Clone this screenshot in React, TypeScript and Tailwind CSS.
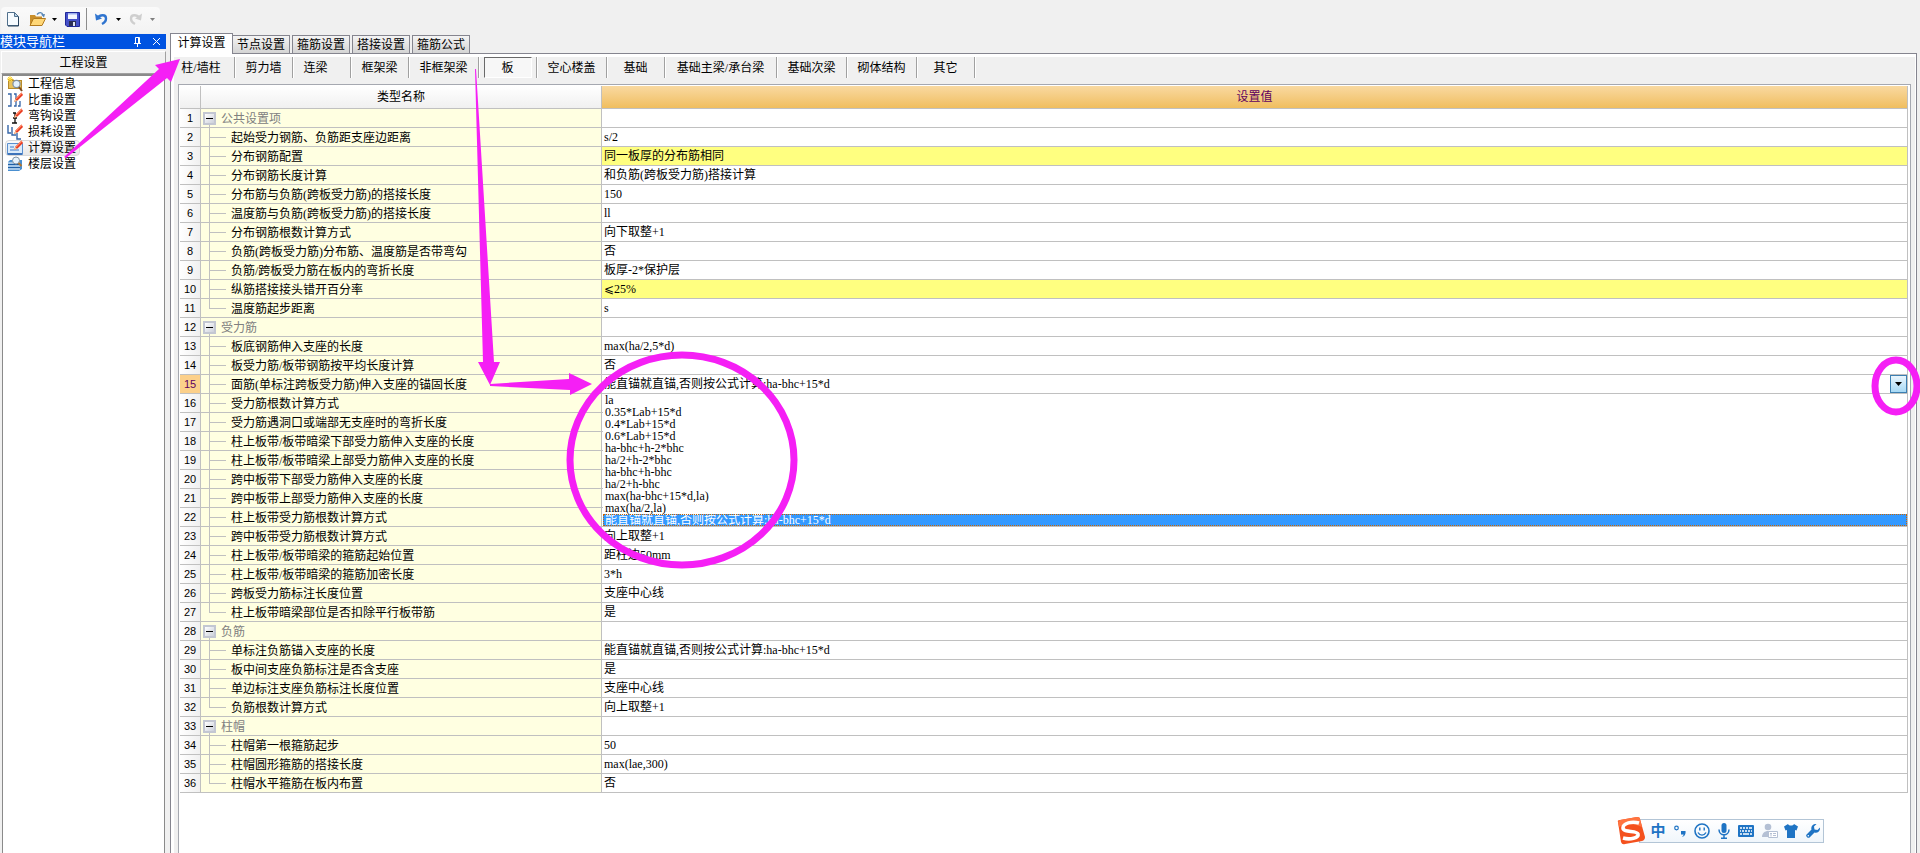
import { useState } from "react";
import { clsx } from "clsx";

type Row = {
  name: string;
  value?: string;
  group?: boolean;
  highlight?: boolean;
};

const ANCHOR = "能直锚就直锚,否则按公式计算:ha-bhc+15*d";

const ROWS: Row[] = [
  { name: "公共设置项", group: true },
  { name: "起始受力钢筋、负筋距支座边距离", value: "s/2" },
  { name: "分布钢筋配置", value: "同一板厚的分布筋相同", highlight: true },
  { name: "分布钢筋长度计算", value: "和负筋(跨板受力筋)搭接计算" },
  { name: "分布筋与负筋(跨板受力筋)的搭接长度", value: "150" },
  { name: "温度筋与负筋(跨板受力筋)的搭接长度", value: "ll" },
  { name: "分布钢筋根数计算方式", value: "向下取整+1" },
  { name: "负筋(跨板受力筋)分布筋、温度筋是否带弯勾", value: "否" },
  { name: "负筋/跨板受力筋在板内的弯折长度", value: "板厚-2*保护层" },
  { name: "纵筋搭接接头错开百分率", value: "⩽25%", highlight: true },
  { name: "温度筋起步距离", value: "s" },
  { name: "受力筋", group: true },
  { name: "板底钢筋伸入支座的长度", value: "max(ha/2,5*d)" },
  { name: "板受力筋/板带钢筋按平均长度计算", value: "否" },
  { name: "面筋(单标注跨板受力筋)伸入支座的锚固长度", value: ANCHOR },
  { name: "受力筋根数计算方式", value: "向上取整+1" },
  { name: "受力筋遇洞口或端部无支座时的弯折长度" },
  { name: "柱上板带/板带暗梁下部受力筋伸入支座的长度" },
  { name: "柱上板带/板带暗梁上部受力筋伸入支座的长度" },
  { name: "跨中板带下部受力筋伸入支座的长度" },
  { name: "跨中板带上部受力筋伸入支座的长度" },
  { name: "柱上板带受力筋根数计算方式" },
  { name: "跨中板带受力筋根数计算方式", value: "向上取整+1" },
  { name: "柱上板带/板带暗梁的箍筋起始位置", value: "距柱边50mm" },
  { name: "柱上板带/板带暗梁的箍筋加密长度", value: "3*h" },
  { name: "跨板受力筋标注长度位置", value: "支座中心线" },
  { name: "柱上板带暗梁部位是否扣除平行板带筋", value: "是" },
  { name: "负筋", group: true },
  { name: "单标注负筋锚入支座的长度", value: ANCHOR },
  { name: "板中间支座负筋标注是否含支座", value: "是" },
  { name: "单边标注支座负筋标注长度位置", value: "支座中心线" },
  { name: "负筋根数计算方式", value: "向上取整+1" },
  { name: "柱帽", group: true },
  { name: "柱帽第一根箍筋起步", value: "50" },
  { name: "柱帽圆形箍筋的搭接长度", value: "max(lae,300)" },
  { name: "柱帽水平箍筋在板内布置", value: "否" },
];

const ACTIVE_ROW = 15;

const OPTIONS = [
  "la",
  "0.35*Lab+15*d",
  "0.4*Lab+15*d",
  "0.6*Lab+15*d",
  "ha-bhc+h-2*bhc",
  "ha/2+h-2*bhc",
  "ha-bhc+h-bhc",
  "ha/2+h-bhc",
  "max(ha-bhc+15*d,la)",
  "max(ha/2,la)",
  ANCHOR,
];

const TABS = ["计算设置", "节点设置", "箍筋设置", "搭接设置", "箍筋公式"];

const MEMBERS = [
  { label: "柱/墙柱", width: "w-[61px] pr-1.5" },
  { label: "剪力墙", width: "w-[58px]" },
  { label: "连梁", width: "w-[58px] pr-3" },
  { label: "框架梁", width: "w-[58px]" },
  { label: "非框架梁", width: "w-[70px]" },
  { label: "板", width: "w-[58px]" },
  { label: "空心楼盖", width: "w-[70px]" },
  { label: "基础", width: "w-[58px]" },
  { label: "基础主梁/承台梁", width: "w-[112px]" },
  { label: "基础次梁", width: "w-[70px]" },
  { label: "砌体结构", width: "w-[70px]" },
  { label: "其它", width: "w-[58px]" },
];

function Pencil() {
  return (
    <g>
      <path d="M14.5 0.5 8.5 6.5 7 10l3.5-1.5L16 3z" fill="#e8391f" />
      <path d="M14.5 0.5 8.5 6.5l1 .8L15.2 1.6z" fill="#ff8a66" />
      <path d="M8.3 6.9 7 10l3-1.3z" fill="#f2cf9c" />
    </g>
  );
}

const NAV = [
  {
    label: "工程信息",
    icon: (
      <>
        <path d="M1 3h5l1 1h8v9H1z" fill="#b78a2a" />
        <path d="M2 5h12v7H2z" fill="#e9c15a" />
        <path d="M3 0v6M0 3h6M1 1l4 4M5 1 1 5" stroke="#ffd835" />
        <circle cx="9.5" cy="8" r="3.6" fill="#e4f1fb" stroke="#7f8fa0" strokeWidth="1.2" />
        <path d="m12 11 3 4" stroke="#7a4a20" strokeWidth="2" />
      </>
    ),
  },
  {
    label: "比重设置",
    icon: (
      <>
        <path d="M1 2h3v12H1M7 2h2v12H7M13 9v5h-2" fill="none" stroke="#3565a8" strokeWidth="1.3" />
        <Pencil />
      </>
    ),
  },
  {
    label: "弯钩设置",
    icon: (
      <>
        <path d="M6 5h3M8 5v10M6 10h4M5 15h5" fill="none" stroke="#111" strokeWidth="1.3" />
        <Pencil />
      </>
    ),
  },
  {
    label: "损耗设置",
    icon: (
      <>
        <path d="M1 1v8h3M5 3v8h4M10 9v6h4" fill="none" stroke="#3565a8" strokeWidth="1.4" />
        <Pencil />
      </>
    ),
  },
  {
    label: "计算设置",
    icon: (
      <>
        <path d="M.5 3.5h15v11H.5z" fill="#dcecfb" stroke="#5b8fce" />
        <path d="M1 13h14v2H1z" fill="#3e74bb" />
        <path d="M3 7h4M3 10h9" stroke="#3c78c8" />
        <Pencil />
      </>
    ),
  },
  {
    label: "楼层设置",
    icon: (
      <>
        <path d="M3 4h12v9l-3 2H1V6z" fill="#4a8fd0" />
        <path d="M1 7h12M1 10h12M1 13h12" stroke="#fff" />
        <path d="M1 8.5h12M1 11.5h12" stroke="#1f5fa6" />
        <circle cx="9" cy="4.5" r="3.5" fill="#e6f3fd" stroke="#8193a5" />
        <path d="m11.5 7 3 3" stroke="#b5762c" strokeWidth="2" />
      </>
    ),
  },
];

function Caret({ muted }: { muted?: boolean }) {
  return (
    <svg className="h-[3px] w-[5px]" viewBox="0 0 5 3" aria-hidden="true">
      <path d="M0 0h5L2.5 3z" fill={muted ? "#808080" : "#000"} />
    </svg>
  );
}

function Toolbar() {
  return (
    <div className="flex h-[33px] pt-[7px] pl-px">
      <div className="flex w-[159px] items-center rounded-sm bg-linear-to-b from-[#fafafa] to-[#f3f3f3] pb-0.5 pl-1.5">
        <button type="button" aria-label="新建">
          <svg className="h-4 w-3" viewBox="0 0 12 16">
            <path d="M.5 1.5h7l4 4v9H.5z" fill="#f6fbff" stroke="#51708c" />
            <path d="M7.5 1.5v4h4z" fill="#b9d3e8" stroke="#51708c" />
            <path d="M11.5 6v9H1" fill="none" stroke="#27425c" />
          </svg>
        </button>
        <button type="button" aria-label="打开" className="ml-2.5">
          <svg className="h-4 w-[17px]" viewBox="0 0 17 16">
            <path d="M1 4h5l1 1.5h6V14H1z" fill="#c98f2b" />
            <path d="M4.5 7.5h12L13 14.5H1z" fill="#ffd777" stroke="#b27a1e" />
            <path d="M8 3.500C10 1 13 1 14 4" fill="none" stroke="#5585b5" strokeWidth="1.3" />
            <path d="m12 3.500 4-.5-1 3.500z" fill="#5585b5" />
          </svg>
        </button>
        <button type="button" aria-label="打开列表" className="ml-1.5">
          <Caret />
        </button>
        <button type="button" aria-label="保存" className="ml-2">
          <svg className="h-[15px] w-[15px]" viewBox="0 0 15 15">
            <path d="M.5.5h14v14H2L.5 13z" fill="#4550c8" stroke="#20289a" />
            <path d="M3 1h9v6H3z" fill="#f4f7ff" />
            <path d="M3 1h9v1.5H3z" fill="#9fb0ee" />
            <path d="M4 9h7v5H4z" fill="#2c2f55" />
            <path d="M8 10h2v4H8z" fill="#dfe4f4" />
          </svg>
        </button>
        <span className="ml-1.5 h-[22px] w-px bg-[#8c8c8c]" />
        <button type="button" aria-label="撤销" className="ml-2">
          <svg className="h-[14px] w-[13px]" viewBox="0 0 13 14">
            <path d="M2.5 6C5 2.5 11 2 11 6.5c0 3-2 4.5-4 5.5" fill="none" stroke="#2f74cf" strokeWidth="2.4" />
            <path d="M0 1.5 1 8.5l6-2z" fill="#2f74cf" />
          </svg>
        </button>
        <button type="button" aria-label="撤销列表" className="ml-2">
          <Caret />
        </button>
        <button type="button" aria-label="重做" className="ml-2">
          <svg className="h-[14px] w-[13px]" viewBox="0 0 13 14">
            <path d="M10.5 6C8 2.5 2 2 2 6.5c0 3 2 4.5 4 5.5" fill="none" stroke="#cfcfcf" strokeWidth="2.4" />
            <path d="m13 1.5-1 7-6-2z" fill="#cfcfcf" />
          </svg>
        </button>
        <button type="button" aria-label="重做列表" className="ml-2">
          <Caret muted />
        </button>
      </div>
    </div>
  );
}

function Sidebar() {
  return (
    <aside className="flex w-[166px] shrink-0 flex-col pt-px">
      <div className="flex h-[15px] items-center bg-[#0053e1] text-[13px] leading-[15px] text-white">
        <h2 className="flex-1">模块导航栏</h2>
        <button type="button" aria-label="固定" className="mr-3">
          <svg className="h-[10px] w-[7px]" viewBox="0 0 7 10">
            <path d="M1.5 6V.5h4V6M0 6.5h7M3.5 7v3M4.5 1v5" fill="none" stroke="#fff" />
          </svg>
        </button>
        <button type="button" aria-label="关闭" className="mr-1.5">
          <svg className="h-[7px] w-[7px]" viewBox="0 0 7 7">
            <path d="m0 0 7 7M7 0 0 7" stroke="#fff" />
          </svg>
        </button>
      </div>
      <button
        type="button"
        className="mt-0.5 ml-px h-[23px] border border-white border-r-[#a0a0a0] border-b-[#a0a0a0] bg-[#f0f0f0] leading-5"
      >
        工程设置
      </button>
      <ul className="mr-px ml-0.5 flex-1 border-x border-t-2 border-[#8a8a8a] bg-white">
        {NAV.map((item) => (
          <li key={item.label} className="flex h-4 pl-0.5">
            <button
              type="button"
              className={clsx(
                "flex w-[75px] items-center gap-[5px] rounded-sm border pl-px leading-[14px]",
                item.label === "计算设置"
                  ? "border-[#d9d9d9] bg-linear-to-b from-[#fafafa] to-[#e8e8e8]"
                  : "border-transparent",
              )}
            >
              <svg className="h-4 w-4 shrink-0" viewBox="0 0 16 16" aria-hidden="true">
                {item.icon}
              </svg>
              {item.label}
            </button>
          </li>
        ))}
      </ul>
    </aside>
  );
}

function NameCell({ row, last }: { row: Row; last: boolean }) {
  if (row.group) {
    return (
      <div className="flex h-[18px] gap-[5px] pl-0.5 text-[#808080]">
        <div className="flex w-[13px] flex-col items-center pt-[3px]">
          <button
            type="button"
            aria-label={`折叠 ${row.name}`}
            className="flex h-[13px] w-[13px] shrink-0 items-center justify-center border-2 border-[#c3c7d2] bg-linear-to-br from-white to-[#ccd0da]"
          >
            <span className="h-px w-[7px] bg-black" />
          </button>
          <span className="w-px flex-1 bg-[#c0c0c0]" />
        </div>
        <span className="leading-5">{row.name}</span>
      </div>
    );
  }
  return (
    <div className="flex h-[18px] gap-[5px] pl-2">
      <div className="flex w-[17px] flex-col">
        <span className="h-[10px] border-b border-l border-[#c0c0c0]" />
        <span className={clsx("flex-1", !last && "border-l border-[#c0c0c0]")} />
      </div>
      <span className="leading-5">{row.name}</span>
    </div>
  );
}

function ValueEditor() {
  const [value, setValue] = useState(ANCHOR);

  return (
    <div className="relative flex h-[18px]">
      <input
        aria-label={ROWS[ACTIVE_ROW - 1].name}
        className="min-w-0 flex-1 bg-white pl-0.5 leading-[18px] outline-none"
        autoFocus
        value={value}
        onChange={(e) => setValue(e.target.value)}
      />
      <button
        type="button"
        aria-label="展开"
        className="flex w-[17px] items-center justify-center border border-[#3c7fb1] bg-linear-to-b from-[#eaf6fd] to-[#a7d9f5]"
      >
        <svg className="h-1 w-[7px]" viewBox="0 0 7 4" aria-hidden="true">
          <path d="M0 0h7L3.5 4z" />
        </svg>
      </button>
      <ul
        role="listbox"
        aria-label="设置值"
        className="absolute top-full right-0 left-px z-10 mt-px bg-white leading-3"
      >
        {OPTIONS.map((option) => (
          <li key={option} role="option" aria-selected={option === value}>
            <button
              type="button"
              onClick={() => setValue(option)}
              className={clsx(
                "block h-3 w-full overflow-hidden pl-0.5 text-left",
                option === value &&
                  "bg-[#3399ff] text-white outline-1 -outline-offset-1 outline-[#cc6600] outline-dotted",
              )}
            >
              {option}
            </button>
          </li>
        ))}
      </ul>
    </div>
  );
}

function SettingsTable() {
  return (
    <table className="w-full table-fixed border-separate border-spacing-0 leading-[18px]">
      <colgroup>
        <col className="w-[21px]" />
        <col className="w-[401px]" />
        <col />
      </colgroup>
      <thead>
        <tr className="h-[23px]">
          <th className="border-r border-b border-[#c0c0c0] bg-linear-to-b from-white to-[#f0f0f0] p-0" />
          <th className="border-r border-b border-[#c0c0c0] bg-linear-to-b from-white to-[#f0f0f0] p-0 font-normal">
            类型名称
          </th>
          <th className="border-r border-b border-[#c0c0c0] bg-linear-to-b from-[#f9d9a0] to-[#f0be5e] p-0 font-normal text-[#600060]">
            设置值
          </th>
        </tr>
      </thead>
      <tbody>
        {ROWS.map((row, i) => {
          const no = i + 1;
          const last = i === ROWS.length - 1 || Boolean(ROWS[i + 1].group);
          return (
            <tr key={no}>
              <th
                scope="row"
                className={clsx(
                  "border-r border-b border-[#c0c0c0] p-0 font-['Liberation_Sans',sans-serif] text-[11px] font-normal",
                  no === ACTIVE_ROW
                    ? "bg-[#fcd08a] text-[#600060]"
                    : "bg-linear-to-r from-white to-[#f0f0f0]",
                )}
              >
                {no}
              </th>
              <td className="border-r border-b border-[#c0c0c0] bg-[#ffffe1] p-0 whitespace-nowrap">
                <NameCell row={row} last={last} />
              </td>
              <td
                className={clsx(
                  "border-r border-b border-[#c0c0c0] p-0",
                  row.highlight && "bg-[#ffff80]",
                )}
              >
                {no === ACTIVE_ROW ? (
                  <ValueEditor />
                ) : (
                  <div className="h-[18px] pl-0.5">{row.value}</div>
                )}
              </td>
            </tr>
          );
        })}
      </tbody>
    </table>
  );
}

function InputMethodBar() {
  return (
    <div className="absolute right-24 bottom-2 z-20 flex items-center">
      <svg className="z-10 -mr-1.5 h-7 w-7" viewBox="0 0 28 28" aria-hidden="true">
        <path d="M1 5Q0 3 3 3L20 0q3 0 3 2l5 18q0 3-3 4L8 27q-3 1-4-2z" fill="#f4511e" />
        <path d="M3 3 20 0q3 0 3 2l2 8Q12 4 2 10L1 5z" fill="#ff7440" />
        <path
          d="M22 6C15 4 6 6 6 11s14 2 15 6-8 6-15 4"
          fill="none"
          stroke="#fff"
          strokeWidth="3.6"
        />
      </svg>
      <div className="flex h-6 w-[185px] items-center border border-[#b3c5d6] bg-linear-to-b from-white to-[#f0f6fb] pl-2.5 text-[#1f74c4]">
        <span className="w-4 text-center text-[15px] leading-[22px] font-bold">中</span>
        <svg className="ml-2 h-4 w-3" viewBox="0 0 12 16" aria-hidden="true">
          <circle cx="2.5" cy="5" r="1.8" fill="none" stroke="currentColor" strokeWidth="1.2" />
          <path d="M7 8h4.500c.5 3-1 5.500-3.500 6 1-1 1.500-1.500 1.500-2.500H7z" fill="currentColor" />
        </svg>
        <svg className="ml-2 h-4 w-4" viewBox="0 0 16 16" aria-hidden="true">
          <circle cx="8" cy="8" r="7" fill="none" stroke="currentColor" strokeWidth="1.6" />
          <path d="M5.8 4.5v3M10.2 4.5v3M4 9.5c2 3.5 6 3.5 8 0" fill="none" stroke="currentColor" strokeWidth="1.4" />
        </svg>
        <svg className="ml-2 h-4 w-3" viewBox="0 0 12 16" aria-hidden="true">
          <rect x="3.5" y="0" width="5" height="10" rx="2.5" fill="currentColor" />
          <path d="M1 6.5c0 7 10 7 10 0M6 12v3M3 15.2h6" fill="none" stroke="currentColor" strokeWidth="1.5" />
        </svg>
        <svg className="ml-2 h-3 w-4" viewBox="0 0 16 12" aria-hidden="true">
          <rect width="16" height="12" rx="1" fill="currentColor" />
          <path
            d="M2 3h2m1 0h2m1 0h2m1 0h3M2 6h1m1 0h2m1 0h2m1 0h2m1 0h1M2 9h2m1 0h6m1 0h2"
            stroke="#fff"
            strokeWidth="1.6"
          />
        </svg>
        <svg className="ml-2 h-4 w-4" viewBox="0 0 16 16" aria-hidden="true">
          <circle cx="6" cy="4" r="3.3" fill="#b4c0d4" />
          <path d="M0 14c0-8 12-8 12 0z" fill="#b4c0d4" />
          <path d="M6.5 8.5h9v6h-9z" fill="#fff" stroke="#b4c0d4" />
          <path d="M8 10.5h2M9 10.5v3M11 10.5h3M11 12.5h3" stroke="#b4c0d4" />
        </svg>
        <svg className="ml-1.5 h-[14px] w-[14px]" viewBox="0 0 14 14" aria-hidden="true">
          <path d="M4 0c1 2 5 2 6 0l4 2.5-1.5 4L11 6v8H3V6l-1.5.5L0 2.5z" fill="currentColor" />
        </svg>
        <svg className="ml-2 h-[14px] w-[14px]" viewBox="0 0 14 14" aria-hidden="true">
          <path
            d="M14 3.5 11.5 6 8.5 5.5 8 2.5 10.5 0C7-.5 4.5 2.500 5.500 5.500L.6 10.400c-1.600 1.600 1.400 4.600 3 3L8.500 8.500C11.500 9.500 14.500 7 14 3.500z"
            fill="currentColor"
          />
          <circle cx="2.3" cy="11.8" r=".8" fill="#fff" />
        </svg>
      </div>
    </div>
  );
}

// Hand-drawn callouts laid over the window
function Callouts() {
  return (
    <>
      <svg
        className="pointer-events-none absolute top-0 left-0 z-20 h-[600px] w-[820px]"
        viewBox="0 0 820 600"
        aria-hidden="true"
      >
        <g fill="#f51ff5">
          <path d="M64 157 159 69 155 65 180 59 171 82 167 78 66 158z" />
          <path d="M475 69h1L494 362h6L490 385 478 362h5z" />
          <path d="M490 384 569 379v-6l23 11-22 11v-5l-80-4z" />
        </g>
        <ellipse cx="682" cy="460" rx="112" ry="105" fill="none" stroke="#f51ff5" strokeWidth="7" />
      </svg>
      <svg
        className="pointer-events-none absolute top-[355px] right-0 z-20 h-16 w-[50px]"
        viewBox="0 0 50 64"
        aria-hidden="true"
      >
        <ellipse cx="26" cy="31" rx="21" ry="26" fill="none" stroke="#f51ff5" strokeWidth="7" />
      </svg>
    </>
  );
}

export default function App() {
  const [tab, setTab] = useState(TABS[0]);
  const [member, setMember] = useState("板");

  return (
    <div className="relative flex min-h-screen flex-col overflow-hidden bg-[#f0f0f0] font-['Liberation_Serif','Noto_Sans_CJK_SC',serif] text-[12px] text-black">
      <Toolbar />
      <div className="flex flex-1">
        <Sidebar />
        <main className="flex min-w-0 flex-1 flex-col pr-[3px] pl-1">
          <div role="tablist" className="flex h-5 items-end">
            {TABS.map((label, i) => (
              <button
                key={label}
                type="button"
                role="tab"
                aria-selected={label === tab}
                onClick={() => setTab(label)}
                className={clsx(
                  "border-x border-t border-[#85858f]",
                  label === tab
                    ? "z-10 -mb-px h-[21px] w-[63px] bg-white pb-0.5 leading-[18px]"
                    : "h-[18px] w-[58px] bg-linear-to-b from-[#f4f4f4] to-[#d4d4d4] leading-[18px]",
                  i === 1 && "-ml-px",
                  i > 1 && "ml-0.5",
                )}
              >
                {label}
              </button>
            ))}
          </div>
          <div className="flex flex-1 flex-col border-x border-t border-[#85858f] bg-white pt-[3px] pr-px pl-[3px]">
            <div className="flex flex-1 flex-col bg-[#f0f0f0]">
              <div className="mb-1.5 flex h-[21px]">
                {MEMBERS.map(({ label, width }) => (
                  <button
                    key={label}
                    type="button"
                    aria-pressed={label === member}
                    onClick={() => setMember(label)}
                    className={clsx(
                      "flex shrink-0 items-center justify-center border-r border-[#a0a0a0] whitespace-nowrap shadow-[1px_0_0_#fff]",
                      width,
                    )}
                  >
                    {label === member ? (
                      <span className="h-[21px] w-12 border border-[#696969] border-r-white border-b-white bg-[#f7f7f7] leading-5">
                        {label}
                      </span>
                    ) : (
                      label
                    )}
                  </button>
                ))}
              </div>
              <div className="mx-1 flex-1 border-x border-t border-[#a5a8b0] bg-white pt-px pr-0.5 pl-px">
                <SettingsTable />
              </div>
            </div>
          </div>
        </main>
      </div>
      <InputMethodBar />
      <Callouts />
    </div>
  );
}
